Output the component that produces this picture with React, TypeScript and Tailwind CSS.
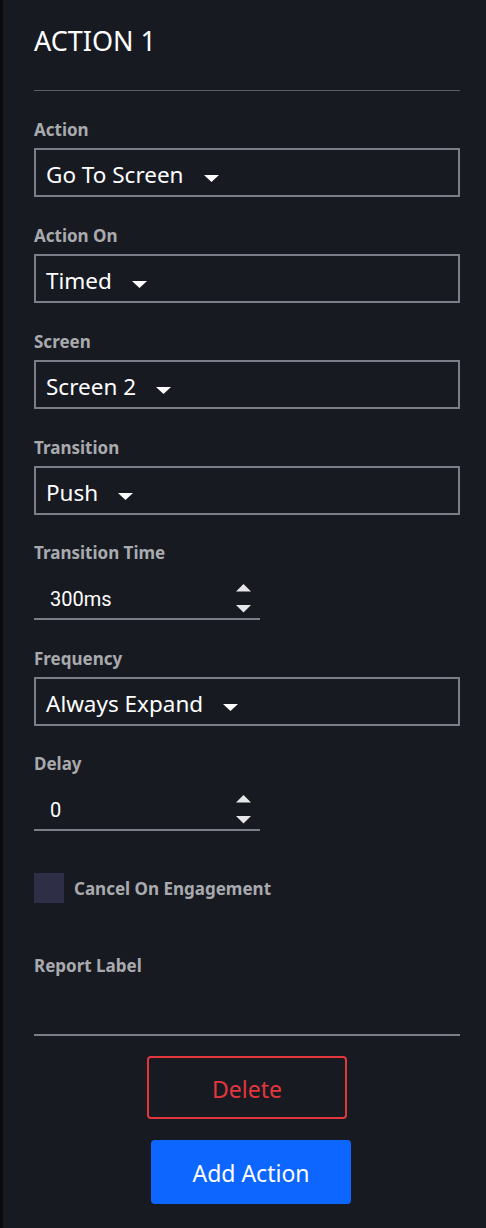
import React from 'react';

const Caret: React.FC = () => (
  <svg width="15" height="7" viewBox="0 0 15 7" className="ml-[20px] mt-[12px] shrink-0">
    <polygon points="0,0 15,0 7.5,7" fill="#ffffff" />
  </svg>
);

const FieldLabel: React.FC<{ children: React.ReactNode }> = ({ children }) => (
  <div className="pt-[1px] text-[17px] leading-[20px] font-bold text-[#a9aaae]">{children}</div>
);

const SelectField: React.FC<{ label: string; value: string }> = ({ label, value }) => (
  <div className="mt-[28px]">
    <FieldLabel>{label}</FieldLabel>
    <div className="mt-[8px] h-[49px] border-2 border-[#7b7d88] flex items-center pl-[10px]">
      <span className="pt-[5px] text-[22.5px] leading-none text-white">{value}</span>
      <Caret />
    </div>
  </div>
);

const NumberField: React.FC<{ label: string; value: string }> = ({ label, value }) => (
  <div className="mt-[27px]">
    <FieldLabel>{label}</FieldLabel>
    <div className="mt-[6px] h-[51px] w-[226px] border-b-2 border-[#7b7d88] flex items-center justify-between pl-[16px] pr-[9px]">
      <span className="pt-[10px] text-[20px] text-white" style={{ fontFamily: 'Roboto, sans-serif' }}>
        {value}
      </span>
      <svg width="15" height="29" viewBox="0 0 15 29" className="mt-[9px]">
        <polygon points="7.5,0 15,7.5 0,7.5" fill="#e6e6e8" />
        <polygon points="0,21 15,21 7.5,28.5" fill="#e6e6e8" />
      </svg>
    </div>
  </div>
);

export default function App() {
  return (
    <div
      className="min-h-[1228px] w-full bg-[#181a22] border-l-[3px] border-[#0b0b0e] pl-[31px] pr-[26px] pt-[25px]"
      style={{ fontFamily: '"Noto Sans", "Open Sans", sans-serif' }}
    >
      <h1 className="text-[27px] leading-[32px] text-white font-normal">ACTION 1</h1>
      <div className="mt-[33px] h-px bg-[#5b5d69]" />

      <SelectField label="Action" value="Go To Screen" />
      <SelectField label="Action On" value="Timed" />
      <SelectField label="Screen" value="Screen 2" />
      <SelectField label="Transition" value="Push" />
      <NumberField label="Transition Time" value="300ms" />
      <SelectField label="Frequency" value="Always Expand" />
      <NumberField label="Delay" value="0" />

      <label className="mt-[42px] flex items-center">
        <span className="w-[30px] h-[30px] bg-[#2e2f47] block" />
        <span className="ml-[10px] pt-[2px] text-[17px] font-bold text-[#a9aaae]">Cancel On Engagement</span>
      </label>

      <div className="mt-[52px]">
        <FieldLabel>Report Label</FieldLabel>
        <div className="mt-[1px] h-[59px] border-b-2 border-[#7b7d88]" />
      </div>

      <div className="mt-[20px] flex flex-col items-center">
        <button className="w-[200px] h-[63px] border-2 border-[#e1373d] rounded-[4px] pt-[3px] text-[23px] text-[#e1373d]">
          Delete
        </button>
        <button className="mt-[21px] ml-[8px] w-[200px] h-[64px] bg-[#0d66ff] rounded-[4px] pt-[3px] text-[23px] text-white">
          Add Action
        </button>
      </div>
    </div>
  );
}
